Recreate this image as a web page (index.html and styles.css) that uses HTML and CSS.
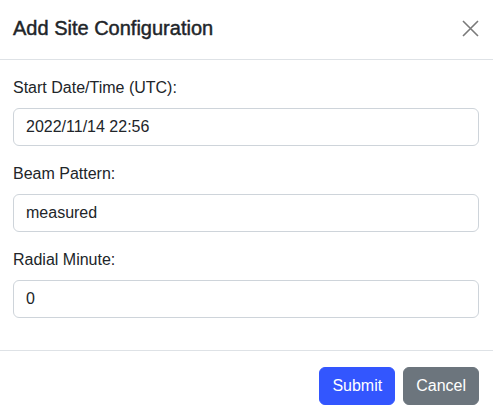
FILE: index.html
```html
<!DOCTYPE html>
<html lang="en">
<head>
<meta charset="utf-8">
<title>Add Site Configuration</title>
<link rel="stylesheet" href="styles.css">
</head>
<body>
<div class="modal">
  <div class="modal-header">
    <h5 class="modal-title">Add Site Configuration</h5>
    <button class="btn-close" type="button" aria-label="Close">
      <svg width="17" height="17" viewBox="0 0 17 17" aria-hidden="true">
        <path d="M1 1 L16 16 M16 1 L1 16" stroke="#7a7a7a" stroke-width="1.6" fill="none"/>
      </svg>
    </button>
  </div>
  <div class="modal-body">
    <div class="field">
      <label class="label">Start Date/Time (UTC):</label>
      <input class="input" type="text" value="2022/11/14 22:56">
    </div>
    <div class="field">
      <label class="label">Beam Pattern:</label>
      <input class="input" type="text" value="measured">
    </div>
    <div class="field">
      <label class="label">Radial Minute:</label>
      <input class="input" type="text" value="0">
    </div>
  </div>
  <div class="modal-footer">
    <button class="btn btn-primary" type="button">Submit</button>
    <button class="btn btn-secondary" type="button">Cancel</button>
  </div>
</div>
</body>
</html>
```
FILE: styles.css
```css
* { box-sizing: border-box; }
html, body { margin: 0; padding: 0; background: #fff; }
body {
  font-family: "Liberation Sans", Arial, Helvetica, sans-serif;
  color: #212529;
  font-size: 16px;
  line-height: 1.5;
  width: 493px;
}
.modal { display: flex; flex-direction: column; }
.modal-header {
  display: flex;
  align-items: center;
  justify-content: space-between;
  padding: 13px 14px 16px 13px;
  border-bottom: 1px solid #dee2e6;
}
.modal-title {
  margin: 0;
  font-size: 20px;
  font-weight: 400;
  line-height: 30px;
  color: #212529;
  -webkit-text-stroke: 0.45px #212529;
}
.btn-close {
  display: flex;
  align-items: center;
  justify-content: center;
  width: 17px;
  height: 17px;
  padding: 0;
  border: 0;
  background: none;
  margin-right: 0;
  cursor: pointer;
}
.modal-body {
  padding: 16px 14px 0 13px;
}
.field {
  display: flex;
  flex-direction: column;
  margin-bottom: 16px;
}
.label {
  line-height: 24px;
  margin-bottom: 8px;
  font-size: 16px;
}
.input {
  height: 38px;
  padding: 6px 12px;
  font-family: inherit;
  font-size: 16px;
  color: #212529;
  border: 1px solid #ced4da;
  border-radius: 6px;
  background: #fff;
  width: 100%;
  outline: none;
}
.modal-footer {
  display: flex;
  justify-content: flex-end;
  align-items: center;
  margin-top: 16px;
  padding: 12px 10px 12px 12px;
  border-top: 1px solid #dee2e6;
}
.btn {
  margin: 4px;
  height: 38px;
  padding: 6px 12px;
  font-family: inherit;
  font-size: 16px;
  line-height: 24px;
  border: 1px solid transparent;
  border-radius: 6px;
  color: #fff;
  cursor: pointer;
}
.btn-primary { background: #3356fe; border-color: #3356fe; }
.btn-secondary { background: #6c757d; border-color: #6c757d; }
```
